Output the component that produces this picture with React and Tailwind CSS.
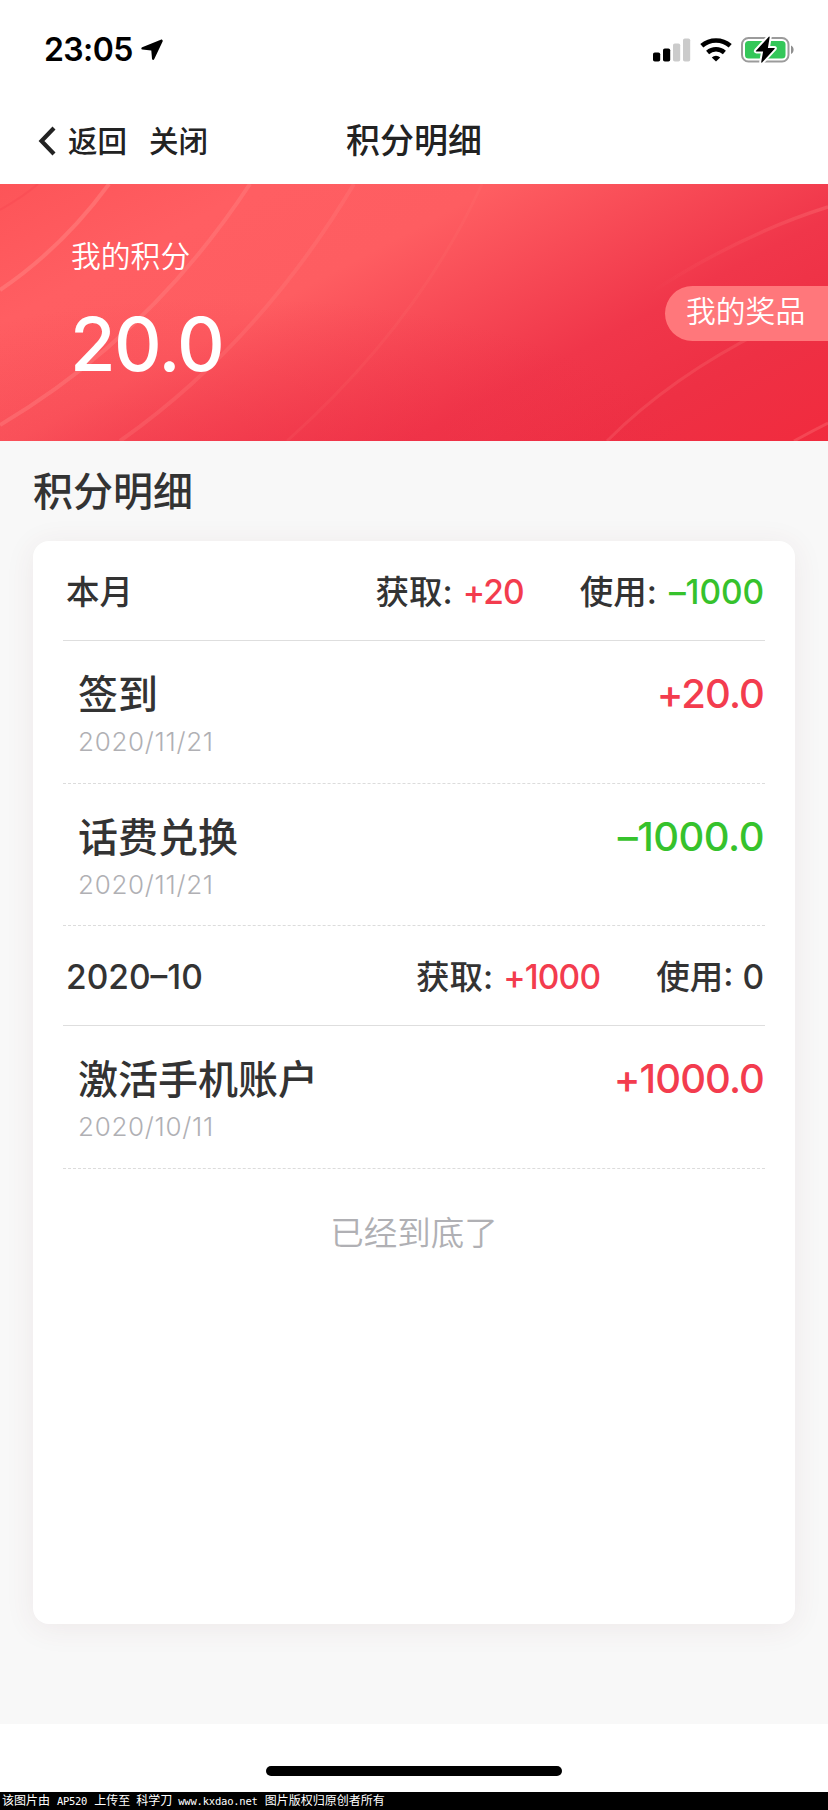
import React from "react";

const groups = [
  {
    month: "本月",
    got: "+20",
    used: "–1000",
    items: [
      { name: "签到", date: "2020/11/21", amount: "+20.0", height: "h-[143px]" },
      { name: "话费兑换", date: "2020/11/21", amount: "–1000.0", height: "h-[142px]" },
    ],
  },
  {
    month: "2020–10",
    got: "+1000",
    used: "0",
    items: [
      { name: "激活手机账户", date: "2020/10/11", amount: "+1000.0", height: "h-[143px]" },
    ],
  },
];

function StatusBar() {
  return (
    <div className="flex h-[100px] items-center justify-between pl-[44px] pr-[33px]">
      <div className="flex items-center gap-[8px] text-black">
        <span className="text-[32px] leading-[40px] font-[580] tracking-[-0.6px]">23:05</span>
        <svg width="22" height="22" viewBox="0 0 22 22">
          <path d="M19.8 .7 1.200 8.200c-1.200.5-1.200 2 .1 2.200l9 1.200 .700 8.200c.1 1.400 1.700 1.600 2.300.3L21.600 2.400c.5-1.100-.7-2.200-1.800-1.700z" />
        </svg>
      </div>
      <div className="flex items-center">
        <svg width="38" height="24" viewBox="0 0 38 24">
          <rect x="0" y="14.500" width="7.200" height="9" rx="1.800" />
          <rect x="10" y="10.500" width="7.200" height="13" rx="1.800" />
          <rect x="20" y="5.500" width="7.200" height="18" rx="1.800" fill="#cbcbcb" />
          <rect x="30" y="0.500" width="7.200" height="23" rx="1.800" fill="#cbcbcb" />
        </svg>
        <svg className="ml-[9px]" width="32" height="24" viewBox="0 0 32 24">
          <g fill="none" stroke="#000" strokeWidth="4.600">
            <path d="M1.800 7.800a21.500 21.500 0 0 1 28.400 0" />
            <path d="M7.600 14.400a13 13 0 0 1 16.800 0" />
          </g>
          <path d="M16 23.600 11.800 19.400a6.200 6.200 0 0 1 8.400 0z" />
        </svg>
        <svg className="ml-[9px] mr-[1px]" width="53" height="28" viewBox="0 0 53 28">
          <rect x="1" y="2" width="46.500" height="23.500" rx="6.500" fill="none" stroke="#9b9b9b" strokeWidth="2" />
          <rect x="4" y="5" width="40.500" height="17.500" rx="3.500" fill="#34c759" />
          <path d="M50 9.500c3.500 1.500 3.500 7 0 8.500z" fill="#8f8f8f" />
          <path
            d="M27.800 .7 15 14.700q-.5.8.5.8h6.600L20.200 26.100q.2.900.900.3L33.700 12.700q.4-.8-.5-.8h-6.300L28.700 1q-.2-.9-.9-.3z"
            stroke="#fff"
            strokeWidth="4"
            strokeLinejoin="round"
            paintOrder="stroke"
          />
        </svg>
      </div>
    </div>
  );
}

function NavBar() {
  return (
    <div className="grid h-[84px] grid-cols-[1fr_auto_1fr] items-center pb-[2px] text-[#222] font-medium">
      <div className="flex items-center pl-[38px] text-[29.500px] leading-[40px]">
        <svg width="18" height="30" viewBox="0 0 18 30" fill="none" stroke="#222" strokeWidth="4.200">
          <path d="M16 2 3.500 15 16 28" />
        </svg>
        <span className="ml-[12px]">返回</span>
        <span className="ml-[22px]">关闭</span>
      </div>
      <h1 className="text-[34px] leading-[40px]">积分明细</h1>
    </div>
  );
}

function Banner() {
  return (
    <section className="relative h-[257px] bg-[radial-gradient(ellipse_480px_190px_at_28%_118%,rgba(236,42,66,0.52),rgba(238,45,68,0)),linear-gradient(152deg,#fd5458_0%,#ff5e62_20%,#fe5d61_38%,#f84c57_51%,#f0364a_68%,#ee3044_82%,#f12b3e_100%)] text-white">
      <svg className="absolute inset-0" width="828" height="257" viewBox="0 0 828 257" fill="none" stroke="#ff8584">
        <defs>
          <linearGradient id="fadeIn" gradientUnits="userSpaceOnUse" x1="650" y1="0" x2="828" y2="0">
            <stop offset="0" stopColor="#ff8584" stopOpacity="0" />
            <stop offset="1" stopColor="#ff8584" stopOpacity=".3" />
          </linearGradient>
        </defs>
        <path d="M0 26Q24 12 38 0" stroke="#f8474f" strokeWidth="2" opacity=".4" />
        <path d="M0 106Q62 64 109 0" strokeWidth="4" opacity=".5" />
        <path d="M0 241Q150 152 250 0" strokeWidth="4" opacity=".4" />
        <path d="M120 257Q258 160 354 0" strokeWidth="4" opacity=".26" />
        <path d="M287 257Q418 140 482 0" strokeWidth="3" opacity=".1" />
        <path d="M644 113Q736 52 828 23" stroke="url(#fadeIn)" strokeWidth="3.500" />
        <path d="M607 257Q692 172 828 118" strokeWidth="3" opacity=".22" />
        <path d="M794 257Q812 247 828 239" strokeWidth="3" opacity=".3" />
      </svg>
      <div className="relative flex h-full items-start justify-between">
        <div className="pl-[71px] pt-[52px]">
          <div className="text-[29.800px] leading-[40px] font-[350]">我的积分</div>
          <div className="mt-[28px] -ml-[1px] text-[74px] leading-[80px] font-[480] tracking-[-1.6px]">20.0</div>
        </div>
        <button className="mt-[102px] h-[55px] w-[163px] rounded-l-full bg-[#ff777b] pb-[5px] pl-[21px] text-left text-[29.800px] leading-[40px] font-[350]">
          我的奖品
        </button>
      </div>
    </section>
  );
}

function GroupHead({ group }) {
  return (
    <div className="flex h-[100px] items-center justify-between border-b border-[#dedede] pt-[3px] pl-[3px] text-[33.500px] font-medium">
      <span>{group.month}</span>
      <div className="flex gap-[56px] pr-px">
        <span>
          获取: <span className="ml-[1px] tracking-[-0.8px] text-[#f33c4e]">{group.got}</span>
        </span>
        <span>
          使用:{" "}
          <span className={group.used === "0" ? "" : "ml-[3px] tracking-[-0.1px] text-[#36c22c]"}>
            {group.used}
          </span>
        </span>
      </div>
    </div>
  );
}

function Record({ item }) {
  const color = item.amount.startsWith("+")
    ? "text-[#f33c4e] tracking-[-0.9px]"
    : "text-[#36c22c] tracking-[-0.5px]";
  return (
    <div className={`flex justify-between border-b border-dashed border-[#dcdcdc] pl-[15px] pt-[28px] ${item.height}`}>
      <div className="pt-[1px]">
        <div className="text-[40px] leading-[50px] font-medium">{item.name}</div>
        <div className="text-[26px] leading-[44px] font-[350] tracking-[0.7px] text-[#b0b0b4]">{item.date}</div>
      </div>
      <div className={`pr-px text-[40px] leading-[50px] font-medium ${color}`}>{item.amount}</div>
    </div>
  );
}

function App() {
  return (
    <div className="flex h-[1810px] w-[828px] flex-col overflow-hidden bg-white font-['Inter','Noto_Sans_CJK_SC',sans-serif] text-[#333]">
      <header>
        <StatusBar />
        <NavBar />
      </header>
      <Banner />
      <main className="h-[1283px] bg-[#f8f8f8] px-[33px] pt-[26px]">
        <h2 className="text-[40px] leading-[50px] font-medium">积分明细</h2>
        <div className="mt-[24px] h-[1083px] rounded-[16px] bg-white px-[30px] shadow-[0_4px_30px_rgba(110,50,60,0.08)]">
          {groups.map((group) => (
            <div key={group.month}>
              <GroupHead group={group} />
              {group.items.map((item) => (
                <Record key={item.name} item={item} />
              ))}
            </div>
          ))}
          <p className="mt-[39px] text-center text-[33.500px] leading-[50px] font-[350] text-[#b0b0b4]">已经到底了</p>
        </div>
      </main>
      <div className="flex h-[68px] justify-center pt-[42px]">
        <div className="h-[10px] w-[296px] rounded-full bg-black" />
      </div>
      <footer className="flex h-[18px] items-center bg-black pl-[2px] font-['DejaVu_Sans_Mono','Noto_Sans_CJK_SC',monospace] text-[12px] leading-[18px] text-white">
        <span>该图片由</span>
        <span className="ml-[7px] text-[10.500px] tracking-[-0.3px]">AP520</span>
        <span className="ml-[7px]">上传至</span>
        <span className="ml-[6px]">科学刀</span>
        <span className="ml-[6px] text-[10.500px] tracking-[-0.2px]">www.kxdao.net</span>
        <span className="ml-[7px]">图片版权归原创者所有</span>
      </footer>
    </div>
  );
}

export default App;
